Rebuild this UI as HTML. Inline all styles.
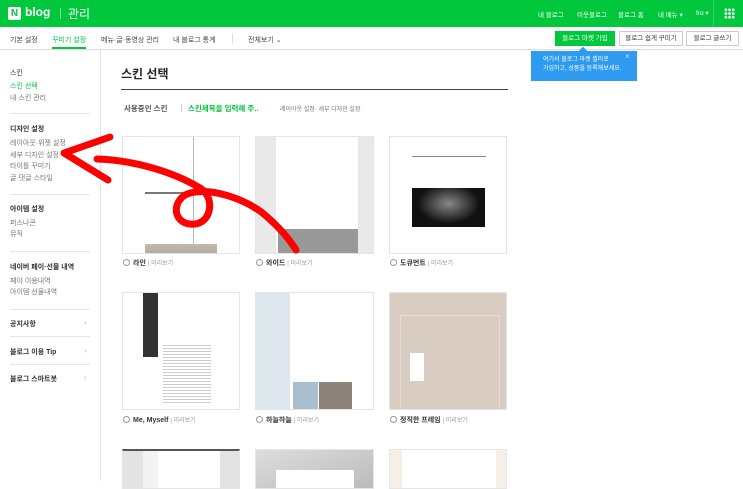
<!DOCTYPE html>
<html><head><meta charset="utf-8"><style>
*{margin:0;padding:0;box-sizing:border-box}
body{width:743px;height:481px;overflow:hidden;background:#fff;font-family:"Liberation Sans","Noto Sans CJK KR",sans-serif;position:relative;color:#333}
.a{position:absolute;white-space:nowrap}
.hd{position:absolute;left:0;top:0;width:743px;height:27px;background:#00c73c}
.sb{position:absolute;left:0;top:27px;width:743px;height:23px;border-bottom:1px solid #ddd;background:#fff}
.s{font-size:7px;color:#444}
.hn{position:absolute;top:9px;color:#fff;font-size:6.5px;white-space:nowrap}
.card{position:absolute;border:1px solid #e5e5e5;background:#fff;overflow:hidden}
.lb{position:absolute;font-size:7px;white-space:nowrap}
.lb b{color:#333;font-weight:bold}
.lb i{font-style:normal;color:#999;font-size:6px}
.rd{display:inline-block;width:7px;height:7px;border:1px solid #999;border-radius:50%;vertical-align:-1px;margin-right:3px}
.ln{position:absolute;height:1px;background:#ccc}
</style></head><body>
<div class="hd"></div>
<div class="a" style="left:8px;top:7px;width:13px;height:13px;background:#fff;border-radius:2px;color:#00c73c;font-weight:bold;font-size:10px;text-align:center;line-height:13px">N</div>
<div class="a" style="left:25px;top:5px;color:#fff;font-weight:bold;font-size:12px">blog</div>
<div class="a" style="left:60px;top:8px;width:1px;height:11px;background:#7fdca8"></div>
<div class="a" style="left:68px;top:5px;color:#fff;font-size:12px">관리</div>
<div class="hn" style="left:538px">내 블로그</div>
<div class="hn" style="left:577px">이웃블로그</div>
<div class="hn" style="left:618px">블로그 홈</div>
<div class="hn" style="left:658px">내 메뉴 ▾</div>
<div class="hn" style="left:696px">fro ▾</div>
<div class="a" style="left:713px;top:0;width:1px;height:27px;background:#2fd27a"></div>
<div class="a" style="left:724px;top:8px;width:11px;height:11px;background:radial-gradient(circle,#fff 1.2px,transparent 1.5px) 0 0/3.7px 3.7px"></div>
<div class="sb"></div>
<div class="a s" style="left:10px;top:35px">기본 설정</div>
<div class="a s" style="left:52px;top:35px;color:#00c73c">꾸미기 설정</div>
<div class="a" style="left:52px;top:47px;width:34px;height:2px;background:#00c73c"></div>
<div class="a s" style="left:101px;top:35px">메뉴·글·동영상 관리</div>
<div class="a s" style="left:173px;top:35px">내 블로그 통계</div>
<div class="a" style="left:232px;top:34px;width:1px;height:10px;background:#ddd"></div>
<div class="a s" style="left:248px;top:35px">전체보기 ⌄</div>
<div class="a" style="left:555px;top:31px;width:60px;height:15px;background:#00c73c;color:#fff;font-size:6.5px;text-align:center;line-height:15px">블로그 마켓 가입</div>
<div class="a" style="left:619px;top:31px;width:64px;height:15px;border:1px solid #ccc;font-size:6.5px;text-align:center;line-height:13px">블로그 쉽게 꾸미기</div>
<div class="a" style="left:686px;top:31px;width:53px;height:15px;border:1px solid #ccc;font-size:6.5px;text-align:center;line-height:13px">블로그 글쓰기</div>
<div class="a" style="left:531px;top:51px;width:106px;height:30px;background:#2e9bf0;color:#fff;font-size:6px;line-height:9px;padding:5px 0 0 12px">여기서 블로그 마켓 셀러로<br>가입하고, 상품을 등록해보세요.</div>
<div class="a" style="left:580px;top:48px;width:6px;height:6px;background:#2e9bf0;transform:rotate(45deg)"></div>
<div class="a" style="left:625px;top:52px;color:#cfe8ff;font-size:8px">×</div>
<div class="a" style="left:100px;top:50px;width:1px;height:431px;background:#e5e5e5"></div>
<div class="a s" style="left:10px;top:68px;color:#333">스킨</div>
<div class="a s" style="left:10px;top:81px;color:#00c73c">스킨 선택</div>
<div class="a s" style="left:10px;top:93px;color:#777">내 스킨 관리</div>
<div class="ln" style="left:10px;top:113px;width:80px;background:#e5e5e5"></div>
<div class="a s" style="left:10px;top:124px;color:#333;font-weight:bold">디자인 설정</div>
<div class="a s" style="left:10px;top:138px;color:#777">레이아웃·위젯 설정</div>
<div class="a s" style="left:10px;top:150px;color:#777">세부 디자인 설정</div>
<div class="a s" style="left:10px;top:161px;color:#777">타이틀 꾸미기</div>
<div class="a s" style="left:10px;top:173px;color:#777">글·댓글 스타일</div>
<div class="ln" style="left:10px;top:194px;width:80px;background:#e5e5e5"></div>
<div class="a s" style="left:10px;top:204px;color:#333;font-weight:bold">아이템 설정</div>
<div class="a s" style="left:10px;top:218px;color:#777">퍼스나콘</div>
<div class="a s" style="left:10px;top:229px;color:#777">뮤직</div>
<div class="ln" style="left:10px;top:251px;width:80px;background:#e5e5e5"></div>
<div class="a s" style="left:10px;top:262px;color:#333;font-weight:bold">네이버 페이·선물 내역</div>
<div class="a s" style="left:10px;top:276px;color:#777">페이 이용내역</div>
<div class="a s" style="left:10px;top:287px;color:#777">아이템 선물내역</div>
<div class="ln" style="left:10px;top:309px;width:80px;background:#e5e5e5"></div>
<div class="a s" style="left:10px;top:319px;color:#333;font-weight:bold">공지사항</div><div class="a" style="left:84px;top:318px;color:#bbb;font-size:8px">›</div>
<div class="ln" style="left:10px;top:336px;width:80px;background:#e5e5e5"></div>
<div class="a s" style="left:10px;top:347px;color:#333;font-weight:bold">블로그 이용 Tip</div><div class="a" style="left:84px;top:346px;color:#bbb;font-size:8px">›</div>
<div class="ln" style="left:10px;top:364px;width:80px;background:#e5e5e5"></div>
<div class="a s" style="left:10px;top:374px;color:#333;font-weight:bold">블로그 스마트봇</div><div class="a" style="left:84px;top:373px;color:#bbb;font-size:8px">›</div>
<div class="a" style="left:121px;top:65px;font-size:12px;font-weight:bold;color:#222">스킨 선택</div>
<div class="a" style="left:121px;top:89px;width:387px;height:1px;background:#444"></div>
<div class="a" style="left:124px;top:103px;font-size:7.5px;font-weight:bold;color:#555">사용중인 스킨</div>
<div class="a" style="left:181px;top:104px;width:1px;height:8px;background:#ccc"></div>
<div class="a" style="left:188px;top:103px;font-size:7.5px;font-weight:bold;color:#00c73c">스킨제목을 입력해 주..</div>
<div class="a" style="left:280px;top:104px;font-size:6px;color:#777">레이아웃 설정<span style="color:#00c73c">·</span> 세부 디자인 설정<span style="color:#00c73c">·</span></div>

<div class="card" style="left:122px;top:136px;width:118px;height:118px"><div class="a" style="left:70px;top:0;width:1px;height:117px;background:#bbb"></div><div class="a" style="left:22px;top:107px;width:72px;height:14px;background:linear-gradient(#c8b9a5,#9aa7ae)"></div><div class="a" style="left:22px;top:55px;width:40px;height:2px;background:#777"></div></div>
<div class="card" style="left:255px;top:136px;width:119px;height:118px;background:#e9e9e9"><div class="a" style="left:20px;top:0;width:82px;height:118px;background:#fff"></div><div class="a" style="left:22px;top:92px;width:80px;height:26px;background:#999"></div></div>
<div class="card" style="left:389px;top:136px;width:118px;height:118px"><div class="a" style="left:22px;top:19px;width:74px;height:1px;background:#888"></div><div class="a" style="left:22px;top:51px;width:73px;height:39px;background:radial-gradient(ellipse at 50% 40%,#888,#111 60%)"></div></div>
<div class="lb" style="left:123px;top:258px"><span class="rd"></span><b>라인</b> <i>| 미리보기</i></div>
<div class="lb" style="left:256px;top:258px"><span class="rd"></span><b>와이드</b> <i>| 미리보기</i></div>
<div class="lb" style="left:390px;top:258px"><span class="rd"></span><b>도큐먼트</b> <i>| 미리보기</i></div>

<div class="card" style="left:122px;top:292px;width:118px;height:118px"><div class="a" style="left:20px;top:0;width:15px;height:64px;background:#333"></div><div class="a" style="left:40px;top:50px;width:48px;height:60px;background:repeating-linear-gradient(#fff 0 2px,#ccc 2px 3px)"></div></div>
<div class="card" style="left:255px;top:292px;width:119px;height:118px"><div class="a" style="left:0;top:0;width:34px;height:118px;background:#dfe7ee"></div><div class="a" style="left:37px;top:89px;width:25px;height:29px;background:#a9bfcf"></div><div class="a" style="left:63px;top:89px;width:33px;height:29px;background:#8b8278"></div></div>
<div class="card" style="left:389px;top:292px;width:118px;height:118px;background:#d9cdc1"><div class="a" style="left:10px;top:22px;width:100px;height:96px;border:1px solid #e8ded5"></div><div class="a" style="left:20px;top:60px;width:14px;height:28px;background:#fff"></div></div>
<div class="lb" style="left:123px;top:415px"><span class="rd"></span><b>Me, Myself</b> <i>| 미리보기</i></div>
<div class="lb" style="left:256px;top:415px"><span class="rd"></span><b>하늘하늘</b> <i>| 미리보기</i></div>
<div class="lb" style="left:390px;top:415px"><span class="rd"></span><b>정직한 프레임</b> <i>| 미리보기</i></div>

<div class="card" style="left:122px;top:449px;width:118px;height:40px;background:#e3e3e3;border-top:2px solid #555"><div class="a" style="left:20px;top:0;width:15px;height:40px;background:#f3f3f3"></div><div class="a" style="left:35px;top:0;width:62px;height:40px;background:#fff"></div></div>
<div class="card" style="left:255px;top:449px;width:119px;height:40px;background:linear-gradient(160deg,#ddd,#bbb)"><div class="a" style="left:20px;top:20px;width:78px;height:20px;background:#fff"></div></div>
<div class="card" style="left:389px;top:449px;width:118px;height:40px;background:#f6efe6"><div class="a" style="left:12px;top:0;width:94px;height:40px;background:#fff"></div></div>

<svg class="a" style="left:0;top:0" width="743" height="481" viewBox="0 0 743 481"><g fill="none" stroke="#f00" stroke-width="7" stroke-linecap="round" stroke-linejoin="round">
<path d="M110 137 L64 153 L108 180"/>
<path d="M97 159 C130 160 170 170 200 188 C215 197 212 222 195 224 C175 226 170 205 185 195 C205 185 245 198 265 215 C280 228 290 240 296 250"/>
</g></svg>
</body></html>
